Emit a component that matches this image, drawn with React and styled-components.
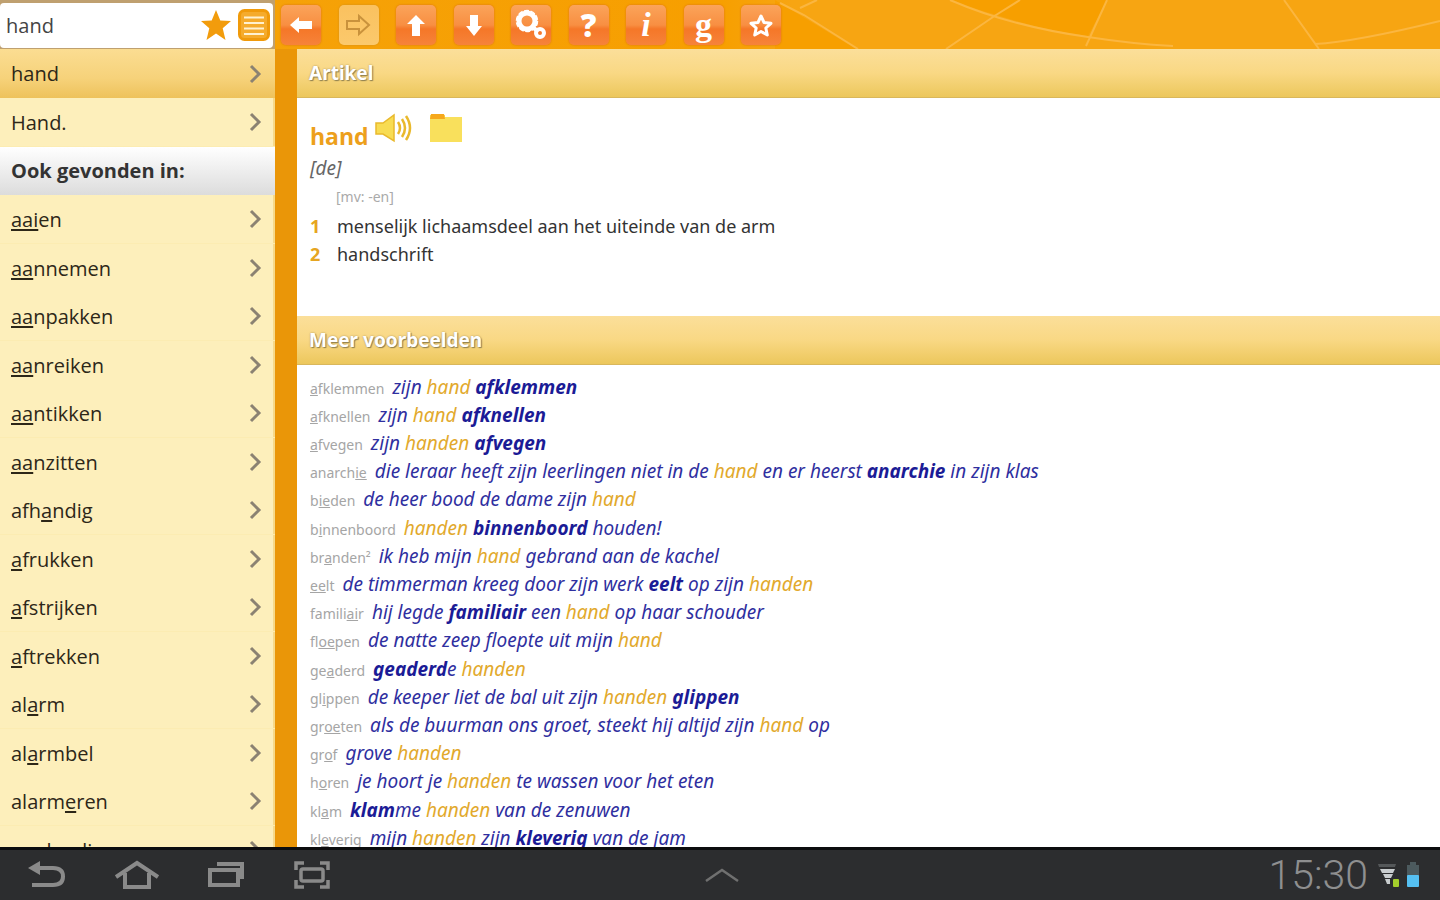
import React, { useState } from 'react';
import styled, { createGlobalStyle } from 'styled-components';

const words = [
  '_aai_en', '_aa_nnemen', '_aa_npakken', '_aa_nreiken', '_aa_ntikken', '_aa_nzitten',
  'afh_a_ndig', '_a_frukken', '_a_fstrijken', '_a_ftrekken', 'al_a_rm', 'al_a_rmbel',
  'alarm_e_ren', 'applaudiss_e_ren',
];

// _underlined_  *bold*  #search hit#
const examples = [
  ['_a_fklemmen', 'zijn #hand# *afklemmen*'],
  ['_a_fknellen', 'zijn #hand# *afknellen*'],
  ['_a_fvegen', 'zijn #handen# *afvegen*'],
  ['anarch_ie_', 'die leraar heeft zijn leerlingen niet in de #hand# en er heerst *anarchie* in zijn klas'],
  ['b_ie_den', 'de heer bood de dame zijn #hand#'],
  ['b_i_nnenboord', '#handen# *binnenboord* houden!'],
  ['br_a_nden²', 'ik heb mijn #hand# gebrand aan de kachel'],
  ['_ee_lt', 'de timmerman kreeg door zijn werk *eelt* op zijn #handen#'],
  ['famili_ai_r', 'hij legde *familiair* een #hand# op haar schouder'],
  ['fl_oe_pen', 'de natte zeep floepte uit mijn #hand#'],
  ['ge_a_derd', '*geaderd*e #handen#'],
  ['gl_i_ppen', 'de keeper liet de bal uit zijn #handen# *glippen*'],
  ['gr_oe_ten', 'als de buurman ons groet, steekt hij altijd zijn #hand# op'],
  ['gr_o_f', 'grove #handen#'],
  ['h_o_ren', 'je hoort je #handen# te wassen voor het eten'],
  ['kl_a_m', '*klam*me #handen# van de zenuwen'],
  ['kl_e_verig', 'mijn #handen# zijn *kleverig* van de jam'],
];

const Markup = ({ text }) =>
  text.split(/(_[^_]+_|\*[^*]+\*|#[^#]+#)/).map((part, i) => {
    const inner = part.slice(1, -1);
    if (part[0] === '_') return <u key={i}>{inner}</u>;
    if (part[0] === '*') return <b key={i}>{inner}</b>;
    if (part[0] === '#') return <Hit key={i}>{inner}</Hit>;
    return part;
  });

const Chevron = () => (
  <svg width="14" height="20" viewBox="0 0 14 20" fill="none" stroke="#8b8272" strokeWidth="3">
    <path d="M2 2l8 8-8 8" />
  </svg>
);

const tools = [
  { label: 'Terug', icon: <path d="M9 20l9-8v4h13v8H18v4z" /> },
  { label: 'Vooruit', off: true, icon: <path d="M8 16h12v-5l10 9-10 9v-5H8z" fill="none" stroke="#c9923c" strokeWidth="2" /> },
  { label: 'Omhoog', icon: <path d="M20 10l9 9h-5v12h-8V19h-5z" /> },
  { label: 'Omlaag', icon: <path d="M20 31l-8-10h4V10h8v11h4z" /> },
  {
    label: 'Instellingen',
    icon: (
      <g fill="none" stroke="#fff">
        <circle cx="16" cy="16" r="8" strokeWidth="5" />
        <circle cx="16" cy="16" r="10.500" strokeWidth="1.500" strokeDasharray="5 1.600" />
        <path d="M22 22l5 5" strokeWidth="4" />
        <circle cx="29" cy="28" r="4" strokeWidth="4" />
      </g>
    ),
  },
  { label: 'Help', glyph: '?', size: 31 },
  { label: 'Info', glyph: 'i', size: 34, serif: true, italic: true },
  { label: 'Grammatica', glyph: 'g', size: 34, serif: true },
  { label: 'Favorieten', icon: <path d="M20 11l3 6.500 7 .8-5.200 4.700 1.500 7-6.300-3.500-6.300 3.500 1.500-7L10 18.300l7-.8z" fill="none" stroke="#fff" strokeWidth="3" strokeLinejoin="round" /> },
];

const App = () => {
  const [query, setQuery] = useState('hand');

  return (
    <Page>
      <GlobalStyle />
      <TopBar>
        <Pattern viewBox="0 0 665 49" width="665" height="49" aria-hidden="true">
          <path d="M0 0L81 49H0z" fill="#f79f00" />
          <path d="M178 0q24 10 44 15L245 0z" fill="#f79f00" />
          <path d="M245 0l-23 15q44 15 91 21L332 0z" fill="#f79f00" />
          <g fill="none" stroke="#fbb640" strokeWidth="2">
            <path d="M5 3l24 12 54 34M25 8L42 0" />
            <path d="M175 0q60 26 138 37 45 7 85 9M171 49l50-34L245 0M332 0l-21 46" />
            <path d="M509 0l35 49M540 44q40-2 125-23" />
          </g>
        </Pattern>
        <SearchSide>
          <SearchBox>
            <SearchInput aria-label="Zoeken" value={query} onChange={(e) => setQuery(e.target.value)} />
            <SearchButton aria-label="Favoriet">
              <svg width="32" height="32" viewBox="0 0 32 32" fill="#f29c0c">
                <path d="M16 1l4.3 10.5L31 12l-8.300 7.300L25.500 31 16 24.500 6.500 31l2.800-11.700L1 12l10.700-.5z" />
              </svg>
            </SearchButton>
            <SearchButton aria-label="Lijst">
              <svg width="32" height="32" viewBox="0 0 32 32">
                <rect x="1.500" y="1.500" width="29" height="29" rx="5" fill="#f5ab2c" stroke="#f09a0a" strokeWidth="3" />
                <path d="M6 8.500h20M6 14h20M6 19.500h20M6 25h20" stroke="#fff1cf" strokeWidth="2" />
              </svg>
            </SearchButton>
          </SearchBox>
        </SearchSide>
        <Toolbar>
          {tools.map((t) => (
            <ToolButton key={t.label} aria-label={t.label} disabled={t.off}>
              {t.glyph ? (
                <Glyph $size={t.size} $serif={t.serif} $italic={t.italic}>{t.glyph}</Glyph>
              ) : (
                <svg width="40" height="40" viewBox="0 0 40 40" fill="#fff">{t.icon}</svg>
              )}
            </ToolButton>
          ))}
        </Toolbar>
      </TopBar>

      <Body>
        <Sidebar>
          <WordRow href="#hand" $active>hand<Chevron /></WordRow>
          <WordRow href="#Hand">Hand.<Chevron /></WordRow>
          <ListTitle>Ook gevonden in:</ListTitle>
          {words.map((w) => (
            <WordRow key={w} href={'#' + w.replace(/_/g, '')}>
              <span><Markup text={w} /></span>
              <Chevron />
            </WordRow>
          ))}
        </Sidebar>
        <Content>
          <SectionTitle>Artikel</SectionTitle>
          <Article>
            <Entry>
              <h1>hand</h1>
              <IconButton aria-label="Uitspraak">
                <svg width="38" height="30" viewBox="0 0 38 30" fill="#f8dc52" stroke="#e9b92c" strokeWidth="1.500">
                  <path d="M1 10h7L19 2v26l-11-7H1z" />
                  <path d="M23 9q4 6 0 12M27 6q6 9 0 18M31 3q8 12 0 24" fill="none" strokeWidth="2.500" />
                </svg>
              </IconButton>
              <IconButton aria-label="Map">
                <svg width="34" height="30" viewBox="0 0 34 30">
                  <path d="M1 2h15v2h17v25H1z" fill="#f9e05c" />
                  <path d="M2 1h13l1 5H1z" fill="#f6a81c" />
                </svg>
              </IconButton>
            </Entry>
            <Gender>[de]</Gender>
            <Plural>[mv: -en]</Plural>
            <Meaning><b>1</b>menselijk lichaamsdeel aan het uiteinde van de arm</Meaning>
            <Meaning><b>2</b>handschrift</Meaning>
          </Article>
          <SectionTitle>Meer voorbeelden</SectionTitle>
          <Examples>
            {examples.map(([word, sentence]) => (
              <Example key={word}>
                <small><Markup text={word} /></small>
                <em><Markup text={sentence} /></em>
              </Example>
            ))}
          </Examples>
        </Content>
      </Body>

      <SystemBar>
        <SystemKeys>
          <SystemButton aria-label="Terug">
            <svg width="44" height="32" viewBox="0 0 44 32" fill="none" stroke="#8a8a8a" strokeWidth="4">
              <path d="M12 9h17q10 0 10 8.500T29 26H8" />
              <path d="M4 9l12-7v14z" fill="#8a8a8a" stroke="none" />
            </svg>
          </SystemButton>
          <SystemButton aria-label="Startscherm">
            <svg width="46" height="32" viewBox="0 0 46 32" fill="none" stroke="#8a8a8a" strokeWidth="4">
              <path d="M2 18L23 4l21 14M11 14v14h24V14" />
            </svg>
          </SystemButton>
          <SystemButton aria-label="Recente apps">
            <svg width="40" height="32" viewBox="0 0 40 32" fill="none" stroke="#8a8a8a" strokeWidth="4">
              <path d="M4 11h28v15H4zM11 5h25v15" />
            </svg>
          </SystemButton>
          <SystemButton aria-label="Schermafbeelding">
            <svg width="40" height="32" viewBox="0 0 40 32" fill="none" stroke="#8a8a8a" strokeWidth="3.500">
              <rect x="9" y="10" width="22" height="12" rx="2" />
              <path d="M4 11V4h8M28 4h8v7M36 21v7h-8M12 28H4v-7" />
            </svg>
          </SystemButton>
        </SystemKeys>
        <SystemButton aria-label="Menu">
          <svg width="36" height="16" viewBox="0 0 36 16" fill="none" stroke="#707070" strokeWidth="2.500">
            <path d="M2 14L18 3l16 11" />
          </svg>
        </SystemButton>
        <Status>
          <time>15:30</time>
          <svg width="22" height="28" viewBox="0 0 22 28">
            <path d="M0 3h18l-1 3H1z" fill="#55585a" />
            <path d="M2 8h15l-2 4H4zM5 13h10l-2 4H7zM7 18h5v5H9z" fill="#c9cdcf" />
            <rect x="15" y="18" width="6" height="8" rx="1" fill="#a5cf2c" />
          </svg>
          <svg width="14" height="28" viewBox="0 0 14 28">
            <path d="M4 1h6v3h3v12H1V4h3z" fill="#4c5a5e" />
            <rect x="1" y="14" width="12" height="12" rx="1" fill="#55c0f2" />
          </svg>
        </Status>
      </SystemBar>
    </Page>
  );
};

const GlobalStyle = createGlobalStyle`
  * {
    box-sizing: border-box;
  }
  body {
    margin: 0;
    font-family: "Noto Sans", "Open Sans", sans-serif;
  }
  button {
    display: flex;
    align-items: center;
    justify-content: center;
    padding: 0;
    border: 0;
    background: none;
    cursor: pointer;
  }
  svg {
    display: block;
    flex-shrink: 0;
  }
`;

const Page = styled.div`
  display: flex;
  flex-direction: column;
  height: 100vh;
  overflow: hidden;
`;

const TopBar = styled.header`
  position: relative;
  display: flex;
  flex-shrink: 0;
  height: 49px;
  background: linear-gradient(90deg, #f5a30c, #f79f00 50%, #f7a512 55%);
`;

const Pattern = styled.svg`
  position: absolute;
  right: 0;
  top: 0;
`;

const SearchSide = styled.div`
  width: 275px;
  padding: 3px 2px 1px 0;
  background: #bfa070;
`;

const SearchBox = styled.div`
  display: flex;
  align-items: center;
  gap: 6px;
  height: 45px;
  padding: 0 3px 1px 6px;
  border-radius: 4px;
  background: #fff;
`;

const SearchInput = styled.input`
  flex: 1;
  min-width: 0;
  padding: 0;
  border: 0;
  outline: 0;
  background: none;
  color: #444;
  font: 500 20px "Open Sans", sans-serif;
`;

const SearchButton = styled.button`
  width: 32px;
  height: 40px;
`;

const Toolbar = styled.nav`
  position: relative;
  display: flex;
  justify-content: space-between;
  align-items: center;
  width: 512px;
  padding: 0 6px;
`;

const ToolButton = styled.button`
  width: 40px;
  height: 40px;
  border-radius: 5px;
  background: ${(p) => (p.disabled
    ? 'linear-gradient(#fac15f, #fbc96c)'
    : 'linear-gradient(#fba45a, #f88f42 50%, #f57728 60%, #f6833a)')};
  box-shadow: 0 0 2px ${(p) => (p.disabled ? '#c98a20' : '#d9661c')};
`;

const Glyph = styled.span`
  color: #fff;
  font-family: ${(p) => (p.$serif ? '"Liberation Serif", serif' : '"Open Sans", sans-serif')};
  font-size: ${(p) => p.$size}px;
  font-style: ${(p) => (p.$italic ? 'italic' : 'normal')};
  font-weight: ${(p) => (p.$serif ? 700 : 800)};
  line-height: 40px;
`;

const Body = styled.div`
  display: flex;
  flex: 1;
  min-height: 0;
`;

const Sidebar = styled.nav`
  width: 297px;
  overflow: hidden;
  border-right: 22px solid #ea9608;
  background: #fdefbb;
  box-shadow: inset -2px 0 #f6d98a;
  font-family: "Open Sans", sans-serif;
`;

const WordRow = styled.a`
  display: flex;
  justify-content: space-between;
  align-items: center;
  height: ${(p) => (p.$active ? 49 : 48)}px;
  padding: 0 12px 0 11px;
  background: ${(p) => (p.$active ? 'linear-gradient(#fbdd92, #f6d27a 60%, #eec25b)' : 'none')};
  color: #2d2718;
  font-size: 20px;
  font-weight: 500;
  text-decoration: none;

  &:nth-child(even) {
    height: 49px;
    border-bottom: 1px solid #fcecb2;
  }

  u {
    text-underline-offset: 2px;
  }
`;

const ListTitle = styled.h2`
  height: 48px;
  margin: 0;
  padding: 0 11px;
  background: linear-gradient(#fff, #dcdcdc);
  color: #333;
  font-size: 20px;
  line-height: 48px;
`;

const Content = styled.main`
  flex: 1;
  min-width: 0;
  overflow: hidden;
  background: #fff;
`;

const SectionTitle = styled.h2`
  height: 49px;
  margin: 0;
  padding: 0 12px;
  border-bottom: 1px solid #d9b75c;
  background: linear-gradient(#fbdf9a, #f9d884 50%, #ecc75c);
  color: #fff;
  font-size: 19px;
  line-height: 48px;
  text-shadow: 1px 1px 1px #8f8050, 0 0 2px #a8905a;
`;

const Article = styled.section`
  height: 218px;
  padding: 14px 13px;
`;

const Entry = styled.div`
  display: flex;
  height: 42px;

  h1 {
    margin: 6px 6px 0 0;
    color: #eda01c;
    font-family: "Open Sans", sans-serif;
    font-size: 23px;
    line-height: 36px;
  }
`;

const IconButton = styled.button`
  height: 32px;
  margin-right: 16px;
`;

const Gender = styled.p`
  margin: 0;
  color: #666;
  font-size: 19px;
  font-style: italic;
  line-height: 28px;
`;

const Plural = styled.p`
  margin: 0 0 0 26px;
  color: #aaa;
  font-size: 14px;
  line-height: 30px;
`;

const Meaning = styled.p`
  display: flex;
  margin: 0;
  color: #333;
  font-size: 18px;
  line-height: 28px;

  b {
    width: 27px;
    color: #e6a521;
  }
`;

const Examples = styled.ul`
  margin: 0;
  padding: 8px 13px;
  list-style: none;
`;

const Example = styled.li`
  height: 28px;
  line-height: 28px;
  white-space: nowrap;

  &:nth-child(5n) {
    margin-bottom: 1px;
  }

  small {
    margin-right: 8px;
    color: #a5a5a5;
    font-size: 14px;
  }

  em {
    color: #2f2fa0;
    font-size: 19px;
  }

  b {
    color: #1b1b96;
  }
`;

const Hit = styled.span`
  color: #e2a92c;
`;

const SystemBar = styled.footer`
  display: grid;
  grid-template-columns: 1fr auto 1fr;
  align-items: center;
  flex-shrink: 0;
  height: 53px;
  padding: 0 20px 0 24px;
  border-top: 3px solid #0c0d0e;
  background: #2c2d2f;
`;

const SystemKeys = styled.div`
  display: flex;
  gap: 46px;
`;

const SystemButton = styled.button`
  height: 40px;
`;

const Status = styled.div`
  display: flex;
  justify-content: flex-end;
  align-items: center;
  gap: 6px;

  time {
    margin-right: 4px;
    color: #8e8f90;
    font-family: Roboto, sans-serif;
    font-size: 41px;
    font-weight: 300;
    line-height: 48px;
  }
`;

export default App;
